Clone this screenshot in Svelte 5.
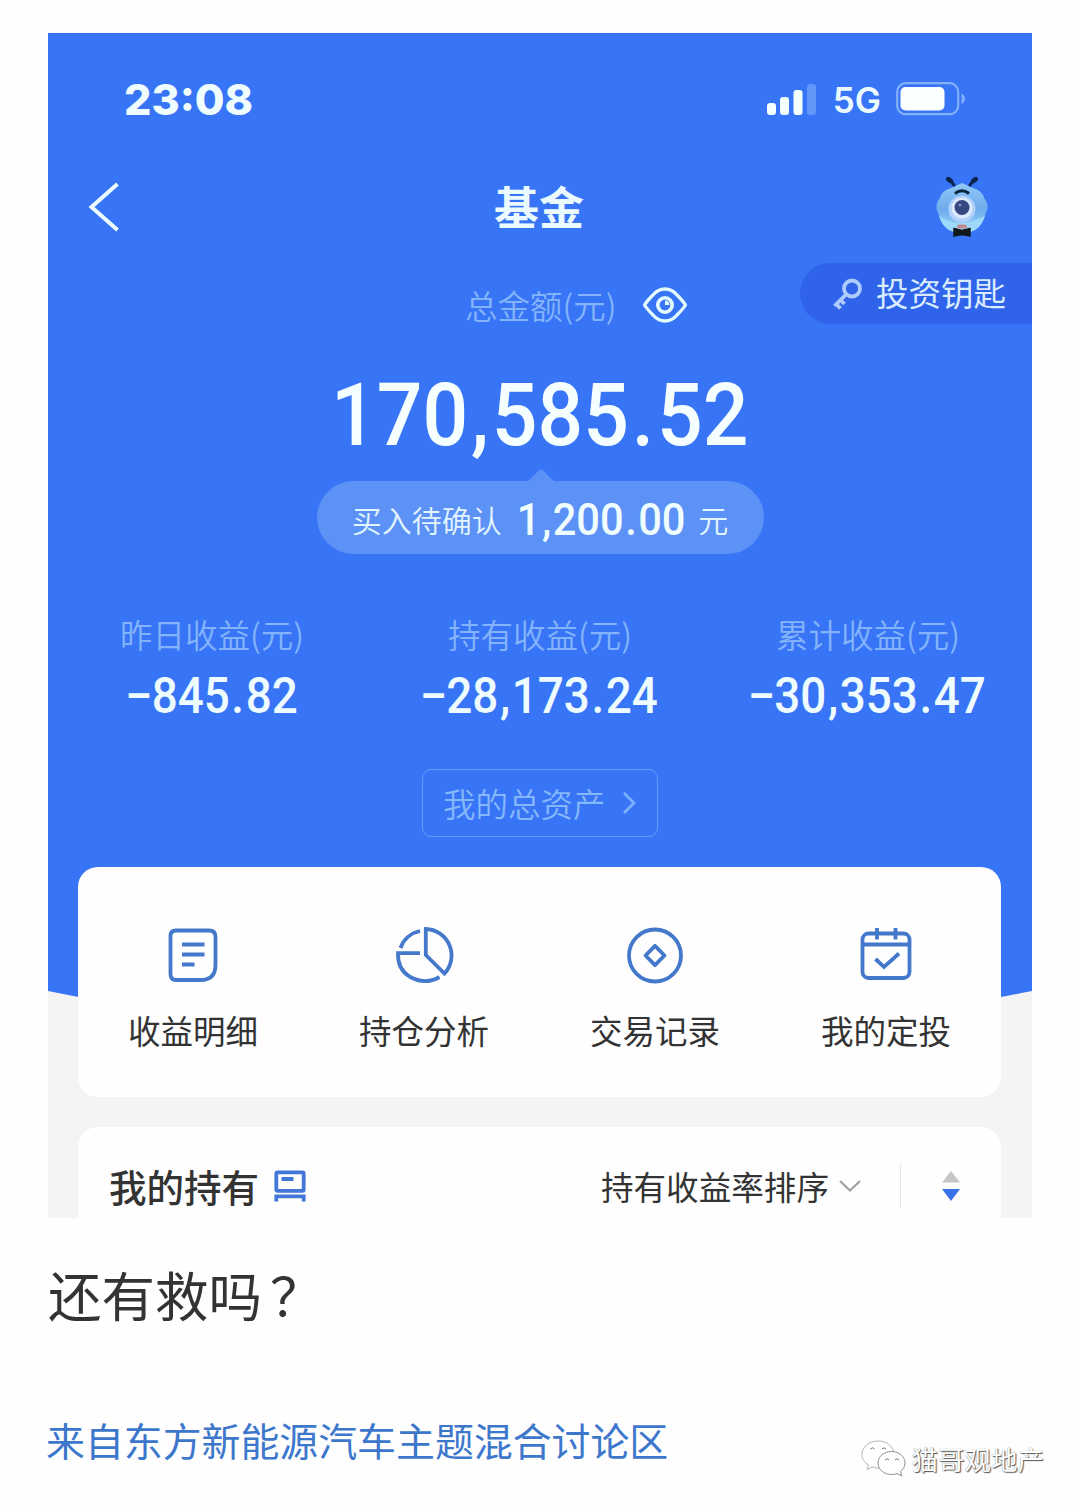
<script>
  const stats = [
    { label: '昨日收益(元)', value: '–845.82' },
    { label: '持有收益(元)', value: '–28,173.24' },
    { label: '累计收益(元)', value: '–30,353.47' }
  ];
  const actions = [
    { label: '收益明细', icon: 'bill' },
    { label: '持仓分析', icon: 'pie' },
    { label: '交易记录', icon: 'coin' },
    { label: '我的定投', icon: 'calendar' }
  ];
</script>

{#snippet digits(text)}
  <span class="num">{#each text.split('') as ch}<span class:punct={ch === ',' || ch === '.'} class:minus={ch === '–'}>{ch}</span>{/each}</span>
{/snippet}

<main class="page">
  <section class="phone">
    <svg class="backdrop" width="984" height="975" viewBox="0 0 984 975">
      <path d="M0 0H984V958Q940 967 890 975H94Q44 967 0 958Z" fill="#3875f6" />
    </svg>

    <header class="status">
      <span class="time">23:08</span>
      <svg class="signal" width="50" height="34" viewBox="0 0 50 34">
        <rect x="1" y="21" width="9" height="12" rx="3" fill="#f4ffff" />
        <rect x="14" y="15" width="9" height="18" rx="3" fill="#f4ffff" />
        <rect x="27.500" y="8" width="9" height="25" rx="3" fill="#f4ffff" />
        <rect x="41" y="2" width="9" height="31" rx="3" fill="#6297fa" />
      </svg>
      <span class="network">5G</span>
      <svg class="battery" width="70" height="34" viewBox="0 0 70 34">
        <rect x="1.200" y="1.200" width="61" height="31" rx="8.500" fill="none" stroke="#83b0fc" stroke-width="2.200" />
        <rect x="4.500" y="5" width="44" height="23.500" rx="5" fill="#fcffff" />
        <path d="M65.500 11.500Q69 13 69 16.500T65.500 22Z" fill="#83b0fc" />
      </svg>
    </header>

    <nav class="nav">
      <svg class="back" width="32" height="50" viewBox="0 0 32 50">
        <path d="M29.500 2L3.500 25L29.500 48" fill="none" stroke="#ecfbff" stroke-width="4" />
      </svg>
      <h1>基金</h1>
      <svg class="mascot" width="56" height="64" viewBox="0 0 56 64">
        <defs>
          <linearGradient id="body" x1="0" y1="0" x2="0" y2="1">
            <stop offset="0" stop-color="#92c8f6" />
            <stop offset=".55" stop-color="#6eabed" />
            <stop offset="1" stop-color="#a0dcfb" />
          </linearGradient>
        </defs>
        <path d="M28 8Q36 12 44 15Q49 18 50 23Q54 27 53.500 34Q51 39 50 44Q45 55 36 57H20Q11 55 6 44Q5 39 2.500 34Q2 27 6 23Q7 18 12 15Q20 12 28 8Z" fill="url(#body)" />
        <path d="M5 41Q17 49 28 48T51 41Q46 55 36 57H20Q9 54 5 41Z" fill="#9fd9fa" />
        <path d="M20 10L16 5M36 10L40 5" stroke="#0b2450" stroke-width="3" stroke-linecap="round" />
        <ellipse cx="15.500" cy="5" rx="4" ry="2.500" transform="rotate(35 15.500 5)" fill="#0b2450" />
        <ellipse cx="40.500" cy="5" rx="4" ry="2.500" transform="rotate(-35 40.500 5)" fill="#0b2450" />
        <path d="M21 18.500Q28 13 35 18.500" fill="none" stroke="#09263f" stroke-width="3" />
        <circle cx="28" cy="34" r="13.500" fill="#b3d2fa" />
        <circle cx="28" cy="33" r="10.500" fill="#dce9fd" />
        <circle cx="28" cy="32.500" r="7.500" fill="#35477e" />
        <circle cx="26" cy="30" r="1.500" fill="#7f91bd" />
        <rect x="23" y="49.500" width="10" height="4" rx="2" fill="#bd8b8d" />
        <path d="M20 53.500L28 55.500L36 53.500V61L28 59.500L20 61Z" fill="#11191f" stroke="#11191f" stroke-width="1.500" stroke-linejoin="round" />
      </svg>
    </nav>

    <div class="total">
      <span class="soft">总金额(元)</span>
      <svg class="eye" width="46" height="38" viewBox="0 0 46 38">
        <path d="M2.500 19Q5 15 11 9Q16 3 23 3T35 9Q41 15 43.500 19Q41 23 35 29Q30 35 23 35T11 29Q5 23 2.500 19Z" fill="none" stroke="#e4fbff" stroke-width="3.300" stroke-linejoin="round" />
        <circle cx="23" cy="19" r="7.200" fill="none" stroke="#e4fbff" stroke-width="3.600" />
        <path d="M23 14.500V19H27.500A4.500 4.500 0 0 0 23 14.500Z" fill="#e4fbff" />
      </svg>
      <div class="key">
        <svg width="32" height="34" viewBox="0 0 32 34" fill="none" stroke="#aecbfd" stroke-width="3.800">
          <circle cx="20" cy="11.500" r="8" />
          <path d="M14 17.500L2.500 29M4 26.500L8.500 31.500M8 22.500L12.500 27" />
        </svg>
        <span>投资钥匙</span>
      </div>
    </div>

    <div class="amount">{@render digits('170,585.52')}</div>

    <div class="pending">
      <svg class="tip" width="26" height="12" viewBox="0 0 26 12"><path d="M0 12L11 1.500Q13 0 15 1.500L26 12Z" fill="#5c92f6" /></svg>
      <span class="pending-label">买入待确认</span>
      <span class="pending-value">{@render digits('1,200.00')}</span>
      <span class="pending-label">元</span>
    </div>

    <div class="stats">
      {#each stats as s}
        <div class="stat">
          <span class="soft">{s.label}</span>
          <div class="stat-value">{@render digits(s.value)}</div>
        </div>
      {/each}
    </div>

    <div class="assets">
      <span>我的总资产</span>
      <svg width="16" height="24" viewBox="0 0 16 24"><path d="M3 2L13 12L3 22" fill="none" stroke="#7db0fb" stroke-width="2.800" /></svg>
    </div>

    <div class="card actions">
      {#each actions as a}
        <div class="action">
          <svg width="64" height="64" viewBox="0 0 64 64" fill="none" stroke="#4378cb" stroke-width="3.800">
            {#if a.icon === 'bill'}
              <path d="M15 6.500H48Q54.500 6.500 54.500 13V41Q54.500 56 39.500 56H15Q9.500 56 9.500 50V12Q9.500 6.500 15 6.500Z" />
              <path d="M21 20.500H43.500M21 30.500H43.500M21 40.500H33.500" />
            {:else if a.icon === 'pie'}
              <path d="M33.800 5A26.500 26.500 0 0 1 52.500 49.500L33.800 31Z" />
              <path d="M28 7A26.500 26.500 0 0 0 8.500 24M28 29.200H6Q5.500 45 17.500 52.500Q33 61.500 47.500 53" />
            {:else if a.icon === 'coin'}
              <circle cx="32" cy="31.500" r="26" />
              <path d="M32 21.800L41.500 31.500L32 41.200L22.500 31.500Z" stroke-linejoin="round" />
            {:else}
              <rect x="8.500" y="9.500" width="47" height="44.500" rx="6" />
              <path d="M8.500 20.500H55.500M23 4V15.500M41.500 4V15.500M21.500 35L30 43L45 29.500" />
            {/if}
          </svg>
          <span>{a.label}</span>
        </div>
      {/each}
    </div>

    <div class="card holdings">
      <h2>我的持有</h2>
      <svg class="doc" width="32" height="32" viewBox="0 0 32 32" fill="none" stroke="#4277d8" stroke-width="3.800">
        <rect x="2.300" y="2.300" width="27.400" height="18.500" rx="1" />
        <path d="M7.500 9H19.500M2.300 31.500V26.300H29.700V31.500" />
      </svg>
      <span class="sort">持有收益率排序</span>
      <svg class="chevron" width="24" height="16" viewBox="0 0 24 16"><path d="M2 3L12 12.500L22 3" fill="none" stroke="#a0a0a0" stroke-width="2.200" /></svg>
      <i class="divider"></i>
      <svg class="order" width="20" height="34" viewBox="0 0 20 34">
        <path d="M10 2L19 13.500H1Z" fill="#c6c6c6" />
        <path d="M1 20H19L10 32Z" fill="#3b71e8" />
      </svg>
    </div>
  </section>

  <p class="question">还有救吗<span>？</span></p>

  <footer>
    <span class="source">来自东方新能源汽车主题混合讨论区</span>
    <div class="brand">
      <svg width="46" height="38" viewBox="0 0 46 38" fill="#fff" stroke="#909090" stroke-width="1">
        <path d="M17 1C8 1 1 7 1 14.500C1 19 3.500 22.500 7.500 25L6 29.500L11.500 27Q15 28.500 19 28C28 27 33 21 33 14.500C33 7 26 1 17 1Z" stroke="#b5b5b5" />
        <path d="M30.500 11.500C23 11.500 17 16.500 17 23S23 34.500 30.500 34.500Q33.500 34.500 36 33.500L41 36L39.500 31.500Q44 28 44 23C44 16.500 38 11.500 30.500 11.500Z" />
        <path d="M9.500 9Q11.500 6.500 13.500 9M21 9Q23 6.500 25 9M24 20Q26 17.500 28 20M34 20Q36 17.500 38 20" stroke="#777" />
      </svg>
      <span>猫哥观地产</span>
    </div>
  </footer>
</main>

<style>
  :global(body) { margin: 0; background: #fff; }
  .page {
    box-sizing: border-box;
    width: 1080px;
    height: 1508px;
    padding: 33px 48px 0;
    overflow: hidden;
    background: #fefefe;
    font-family: "Noto Sans CJK SC", sans-serif;
    color: #333;
    white-space: nowrap;
  }
  .phone {
    position: relative;
    z-index: 0;
    display: flex;
    flex-direction: column;
    height: 1185px;
    overflow: hidden;
    background: #f4f4f4;
  }
  .phone > * { flex: none; }
  .backdrop { position: absolute; top: 0; left: 0; z-index: -1; }
  svg { display: block; flex: none; }
  h1, h2, p { margin: 0; }

  .status { display: flex; align-items: center; height: 131px; padding: 0 66px 0 76px; }
  .time { margin-right: auto; font: 800 43px/60px Inter, sans-serif; color: #f0fdff; }
  .network { margin: 2px 15px 0 17px; font: 600 35px/50px Inter, sans-serif; color: #ecfaff; }

  .nav { display: flex; align-items: center; justify-content: space-between; height: 86px; padding: 0 42px 0 40px; }
  h1 { margin: -3px 0 0 24px; font-size: 45px; line-height: 60px; font-weight: 600; color: #ebfaff; }

  .total { display: flex; height: 109px; padding-left: 417px; }
  .soft { font-size: 32.5px; line-height: 40px; font-weight: 350; color: #83b4fb; }
  .total .soft { margin-top: 35px; }
  .eye { margin: 36px 0 0 25px; }
  .key {
    display: flex;
    align-items: center;
    box-sizing: border-box;
    width: 232px;
    height: 61px;
    margin: 13px 0 0 auto;
    padding-left: 32px;
    gap: 12px;
    border-radius: 31px 0 0 31px;
    background: #2e63ea;
    color: #d9ebff;
    font-size: 32.5px;
    line-height: 56px;
  }
  .key span { margin-top: -4px; }

  .num { display: inline-block; font-family: Roboto, sans-serif; font-weight: 500; transform: scaleX(.925); }
  .num span { display: inline-block; }
  .num .punct { padding: 0 .035em; }
  .num .minus { margin: 0 -.03em 0 -.03em; transform: scaleX(.9); }

  .amount { display: flex; justify-content: center; height: 114px; font-size: 87px; line-height: 112px; color: #f6ffff; }

  .pending {
    position: relative;
    display: flex;
    align-items: center;
    align-self: center;
    justify-content: center;
    width: 447px;
    height: 73px;
    margin-top: 8px;
    border-radius: 37px;
    background: #5c92f6;
  }
  .tip { position: absolute; top: -12px; left: 211px; }
  .pending-label { margin-top: 3px; font-size: 30px; font-weight: 350; color: #e2f5ff; line-height: 73px; }
  .pending-value { margin: -1px 6px 0 8px; font-size: 45px; line-height: 73px; color: #effdff; }

  .stats { display: grid; grid-template-columns: repeat(3, 328px); height: 123px; margin-top: 60px; }
  .stat { display: flex; flex-direction: column; align-items: center; }
  .stat-value { margin: -3px 2px 0 0; font-size: 49.5px; line-height: 82px; color: #eefcff; }

  .assets {
    display: flex;
    align-items: center;
    align-self: center;
    box-sizing: border-box;
    width: 236px;
    height: 68px;
    margin-top: 32px;
    padding-left: 20px;
    gap: 15px;
    border: 1.500px solid #629cfa;
    border-radius: 9px;
    color: #85b7fb;
    font-size: 32.5px;
    font-weight: 350;
    line-height: 60px;
  }

  .card { width: 923px; box-sizing: border-box; margin-left: 30px; background: #fefefe; }
  .actions { display: grid; grid-template-columns: repeat(4, 231px); height: 230px; margin-top: 30px; border-radius: 20px; }
  .action { display: flex; flex-direction: column; align-items: center; padding: 57px 1px 0 0; font-size: 32.5px; line-height: 48px; }
  .action span { margin-top: 18px; }

  .holdings { display: flex; align-items: center; height: 118px; margin-top: 30px; padding: 0 40px 0 31px; border-radius: 20px 20px 0 0; }
  h2 { font-size: 37.5px; font-weight: 500; line-height: 50px; }
  .doc { margin-left: 15px; }
  .sort { margin-left: auto; font-size: 32.6px; line-height: 50px; }
  .chevron { margin-left: 9px; }
  .divider { width: 1px; height: 44px; margin: 0 40px 0 38px; background: #e7e7e7; }

  .question { height: 80px; margin-top: 36px; font-size: 53.5px; line-height: 80px; }
  .question span { margin-left: 8px; }
  footer { display: flex; align-items: center; justify-content: space-between; margin: 65px -12px 0 -2px; }
  .source { font-size: 38.9px; line-height: 60px; color: #3d77cc; }
  .brand { display: flex; align-items: center; gap: 5px; margin-top: 41px; font-size: 26.500px; line-height: 38px; color: #fff; text-shadow: 1px 1px 1px #555, 0 0 1px #777; }
</style>
